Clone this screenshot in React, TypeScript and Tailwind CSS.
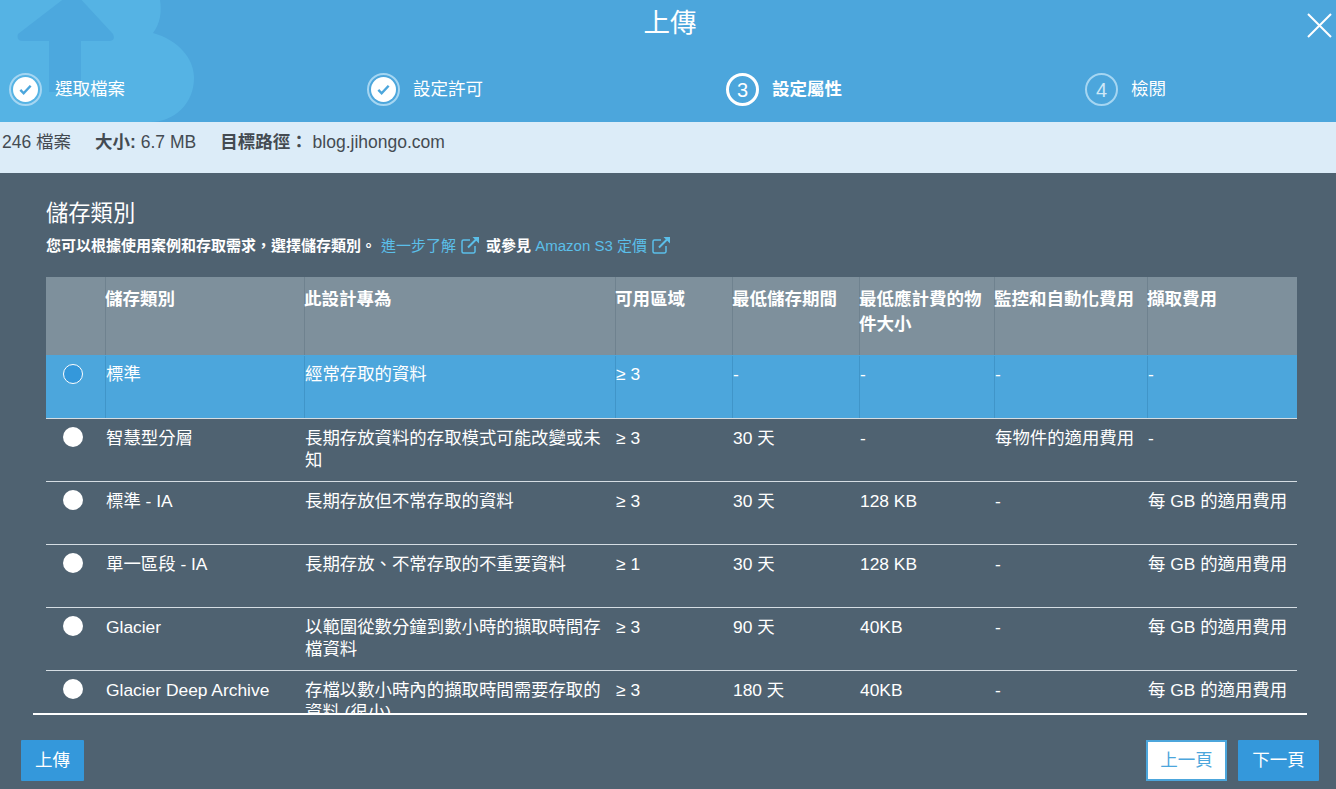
const rows = [
  { name: "標準", use: "經常存取的資料", az: "≥ 3", days: "-", size: "-", monitor: "-", fee: "-", selected: true },
  { name: "智慧型分層", use: "長期存放資料的存取模式可能改變或未知", az: "≥ 3", days: "30 天", size: "-", monitor: "每物件的適用費用", fee: "-" },
  { name: "標準 - IA", use: "長期存放但不常存取的資料", az: "≥ 3", days: "30 天", size: "128 KB", monitor: "-", fee: "每 GB 的適用費用" },
  { name: "單一區段 - IA", use: "長期存放、不常存取的不重要資料", az: "≥ 1", days: "30 天", size: "128 KB", monitor: "-", fee: "每 GB 的適用費用" },
  { name: "Glacier", use: "以範圍從數分鐘到數小時的擷取時間存檔資料", az: "≥ 3", days: "90 天", size: "40KB", monitor: "-", fee: "每 GB 的適用費用" },
  { name: "Glacier Deep Archive", use: "存檔以數小時內的擷取時間需要存取的資料 (很小)", az: "≥ 3", days: "180 天", size: "40KB", monitor: "-", fee: "每 GB 的適用費用" },
];

const headers = ["儲存類別", "此設計專為", "可用區域", "最低儲存期間", "最低應計費的物件大小", "監控和自動化費用", "擷取費用"];

const gridCols = "grid grid-cols-[59px_199px_311px_117px_127px_135px_153px_150px]";

function StepDone({ label }: { label: string }) {
  return (
    <div className="flex items-center">
      <div className="flex h-[33px] w-[33px] items-center justify-center rounded-full border-2 border-[#a5d6f2]">
        <div className="flex h-[25px] w-[25px] items-center justify-center rounded-full bg-white">
          <svg viewBox="0 0 16 16" className="h-[15px] w-[15px]">
            <path d="M2.5 8.5l3.5 3.5 7.5-8" fill="none" stroke="#4ca6dc" strokeWidth="2.6" />
          </svg>
        </div>
      </div>
      <span className="ml-[13px] text-[17.5px] text-white">{label}</span>
    </div>
  );
}

function StepNumber({ n, label, active }: { n: number; label: string; active?: boolean }) {
  return (
    <div className="flex items-center">
      <div
        className={
          active
            ? "flex h-[33px] w-[33px] items-center justify-center rounded-full border-[3px] border-white text-[20px] text-white"
            : "flex h-[33px] w-[33px] items-center justify-center rounded-full border-2 border-[#a5d6f2] text-[20px] text-[#cfe8f7]"
        }
      >
        {n}
      </div>
      <span className={active ? "ml-[13px] text-[17.5px] font-bold text-white" : "ml-[13px] text-[17.5px] text-white"}>{label}</span>
    </div>
  );
}

function LinkIcon() {
  return (
    <svg viewBox="0 0 19 18" className="ml-[5px] inline-block h-[18px] w-[19px] align-[-3px]" fill="none" stroke="#5bbfe9" strokeWidth="1.5">
      <path d="M9 4H2.5A1.5 1.5 0 0 0 1 5.5v10A1.5 1.5 0 0 0 2.5 17h10a1.5 1.5 0 0 0 1.5-1.5V10" />
      <path d="M7 11.5L15 3.5" strokeWidth="2" />
      <path d="M11.5 1H18V7.5Z" stroke="none" fill="#5bbfe9" />
    </svg>
  );
}

export default function App() {
  return (
    <div className="flex h-[789px] w-[1336px] flex-col overflow-hidden bg-[#4f6271] font-['Liberation_Sans','Noto_Sans_CJK_TC',sans-serif] text-white">
      <div className="relative h-[122px] shrink-0 overflow-hidden bg-[#4ca6dc]">
        <svg className="absolute left-0 top-0 h-[122px] w-[200px]" viewBox="0 0 200 122">
          <path d="M0 0H160C162 12 160 24 153 33C178 40 194 58 194 78C194 104 174 122 150 122H0Z" fill="#55b3e4" />
          <path d="M70 -6L18 34Q16 41 23 41H49V92H81V41H109Q116 41 113 34L76 -6Z" fill="#4ca8de" />
        </svg>
        <h1 className="relative pl-[4px] pt-[5px] text-center text-[26.5px] leading-[36px]">上傳</h1>
        <svg className="absolute right-[3px] top-[12px] h-[27px] w-[27px]" viewBox="0 0 27 27" fill="none" stroke="white" strokeWidth="2">
          <path d="M2 2L25 25M25 2L2 25" />
        </svg>
        <div className="relative mt-[32px] grid grid-cols-[358px_359px_359px_1fr] pl-[9px]">
          <StepDone label="選取檔案" />
          <StepDone label="設定許可" />
          <StepNumber n={3} label="設定屬性" active />
          <StepNumber n={4} label="檢閱" />
        </div>
      </div>

      <div className="flex h-[51px] shrink-0 items-start bg-[#dcecf8] pl-[2px] pt-[8px] text-[17.5px] leading-[24px] text-[#444b52]">
        <span>246 檔案</span>
        <span className="ml-[24px]"><b>大小:</b> 6.7 MB</span>
        <span className="ml-[24px]"><b>目標路徑：</b> blog.jihongo.com</span>
      </div>

      <div className="ml-[33px] mr-[29px] h-[542px] shrink-0 overflow-hidden border-b-2 border-white pl-[13px] pr-[10px] pt-[27px]">
        <h2 className="text-[22.3px] leading-[28px]">儲存類別</h2>
        <p className="mt-[8px] text-[15px] font-bold leading-[20px]">
          您可以根據使用案例和存取需求，選擇儲存類別。
          <a className="ml-[5px] font-normal text-[#5bbfe9]">進一步了解<LinkIcon /></a>
          <span className="ml-[6px]">或參見 </span>
          <a className="font-normal text-[#5bbfe9]">Amazon S3 定價<LinkIcon /></a>
        </p>

        <div className={`${gridCols} mt-[21px] h-[78px] bg-[#7e909c]`}>
          <div />
          {headers.map((h) => (
            <div key={h} className="border-l border-[#6f828f] pt-[10px] text-[17.5px] font-bold leading-[25px]">
              <div className="-ml-px">{h}</div>
            </div>
          ))}
        </div>

        {rows.map((r) => (
          <div
            key={r.name}
            className={`${gridCols} h-[63px] border-t ${r.selected ? "border-transparent bg-[#4ca6dc]" : "border-[#d5dde3]"} text-[17.4px] leading-[22px]`}
          >
            <div className="pl-[17px] pt-[8px]">
              <div
                className={
                  r.selected
                    ? "h-[20px] w-[20px] rounded-full border border-white bg-[#3498db]"
                    : "h-[20px] w-[20px] rounded-full bg-white"
                }
              />
            </div>
            {[r.name, r.use, r.az, r.days, r.size, r.monitor, r.fee].map((v, i) => (
              <div key={i} className={`${r.selected ? "border-[#4095c9] pt-[7px]" : "border-transparent pt-[8px]"} border-l pr-[8px]`}>
                {v}
              </div>
            ))}
          </div>
        ))}
      </div>

      <div className="flex items-start justify-between pl-[21px] pr-[17px] pt-[25px]">
        <button className="h-[41px] w-[63px] rounded-[1px] bg-[#3498db] text-[17.5px] text-white">上傳</button>
        <div className="flex gap-[11px]">
          <button className="h-[41px] w-[81px] border-2 border-[#4ca6dc] bg-white text-[17.5px] text-[#4ca6dc]">上一頁</button>
          <button className="h-[41px] w-[81px] rounded-[1px] bg-[#3498db] text-[17.5px] text-white">下一頁</button>
        </div>
      </div>
    </div>
  );
}
